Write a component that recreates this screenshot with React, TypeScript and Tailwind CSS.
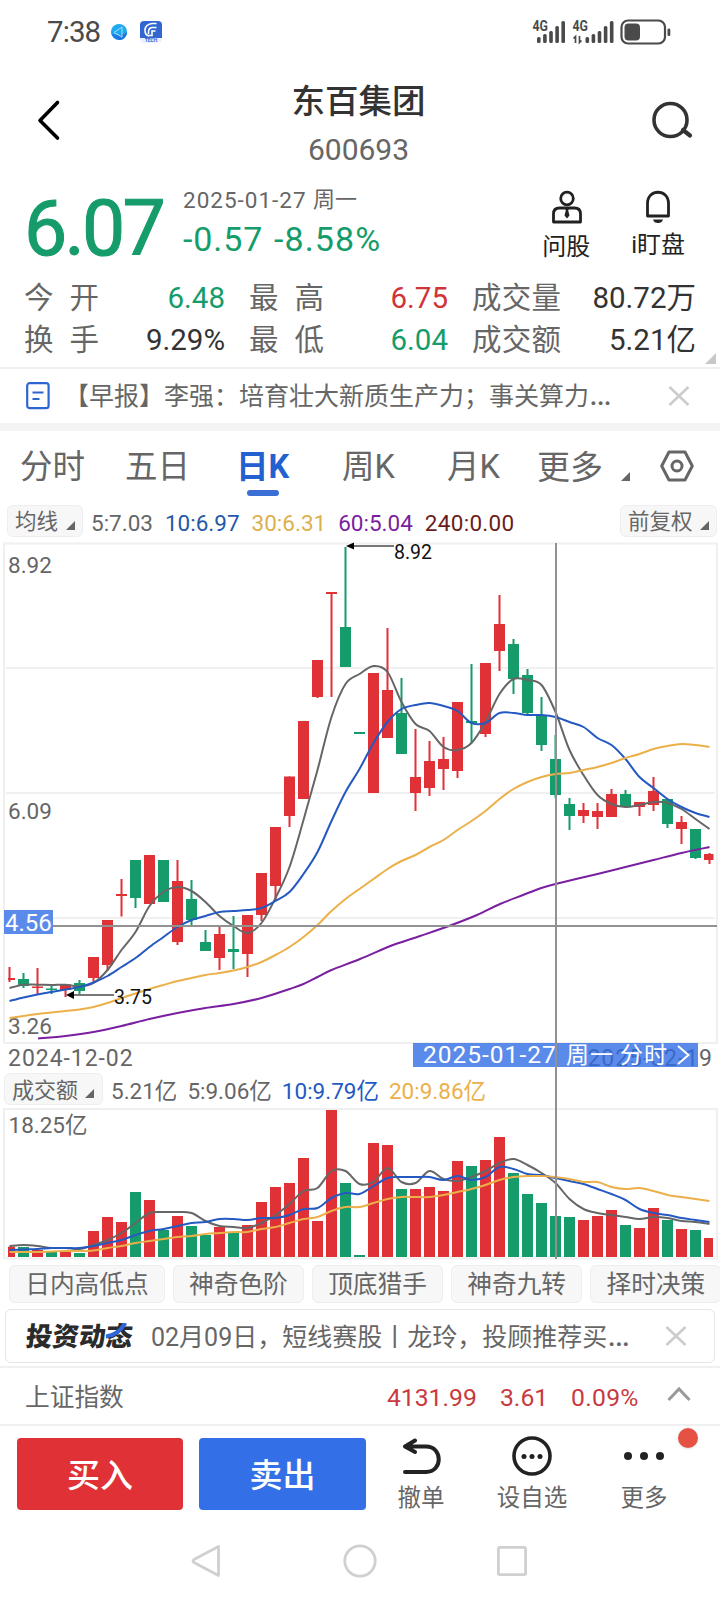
import React from "react";

type Candle = {
  up: boolean;
  top: number;
  bottom: number;
  high: number;
  low: number;
};

const RED = "#df3136";
const GREEN = "#159c6a";
const GRAY = "#666666";
const BLUE = "#2459c2";
const ORANGE = "#ecb04a";
const PURPLE = "#7a1fa0";

const STEP = 14;
const FIRST_X = 9.5;

const c = (up: number, top: number, bottom: number, high = top, low = bottom): Candle => ({
  up: up === 1,
  top,
  bottom,
  high,
  low,
});

const candles: Candle[] = [
  c(1, 978, 980, 967, 982), c(0, 979, 986, 973, 988), c(1, 986.5, 988, 968, 994),
  c(0, 988.5, 990, 986, 994), c(1, 984.5, 990, 984.5, 997), c(0, 983, 991, 980, 994),
  c(1, 957, 978, 957, 982), c(1, 920, 965, 920, 971), c(1, 894, 896, 879, 916.5),
  c(0, 860, 898, 860, 908), c(1, 855, 904), c(0, 860, 902),
  c(1, 881, 942, 860, 945), c(0, 899, 920, 880, 925), c(0, 942, 951, 930, 951),
  c(1, 934, 958, 927, 970), c(0, 949, 952, 916, 969), c(1, 915, 954, 915, 977),
  c(1, 873, 915, 873, 921), c(1, 827, 886, 827, 901), c(1, 776.5, 816, 776.5, 827),
  c(1, 721, 799), c(1, 660, 697, 660, 698), c(1, 592, 594, 592, 697),
  c(0, 627, 667, 547, 667), c(0, 732, 734), c(1, 673, 793),
  c(1, 690, 738, 628, 738), c(0, 713, 754, 678, 754), c(1, 777, 793, 729, 811),
  c(1, 761, 788, 741, 796), c(1, 759, 769, 737, 790), c(1, 702, 771, 702, 778),
  c(0, 721, 723, 664, 743), c(1, 663, 734, 663, 737), c(1, 624, 651, 595, 671),
  c(0, 644, 679, 639, 694), c(0, 675, 713, 669, 714), c(0, 715, 745, 697, 751),
  c(0, 759, 795, 735, 798), c(0, 804, 816, 798, 830), c(1, 810, 816, 803, 823),
  c(1, 811, 817, 803, 829), c(1, 794, 817, 789, 817), c(0, 794, 806, 790, 806),
  c(1, 802, 807, 802, 816), c(1, 791, 805, 777, 811), c(0, 799, 824, 799, 828),
  c(1, 822, 829, 816, 844), c(0, 829, 858, 829, 859), c(1, 854, 860, 853, 864),
];

const ma5 = [
  988, 984.7, 984.7, 985, 984.7, 986.5, 983, 970, 950, 932, 906, 892, 887, 891, 902, 916, 926,
  933, 923, 898, 867, 820, 770, 717, 684, 674, 666, 672, 702, 724, 731, 747, 750, 743, 722, 694,
  679, 680, 685, 712, 750, 775, 795, 804, 807, 805, 802, 803, 809, 819, 829,
];

const ma10 = [
  1001, 997.5, 994.5, 992, 989.5, 987, 982.5, 976, 967, 958, 947, 937, 927, 920, 916, 912, 911,
  910, 908, 901, 892, 874, 852, 821, 792, 769, 743, 722, 709, 705, 703, 706, 711, 723, 723, 713,
  713, 715, 715, 717, 722, 727, 738, 745, 759, 777, 788, 799, 807, 813, 817,
];

const ma30 = [
  1018, 1016, 1014, 1012.5, 1011, 1009.5, 1007, 1003, 998, 993.5, 989, 985, 981, 978, 975, 973,
  970.5, 967, 962, 955, 947, 937, 925, 911, 899, 889, 879, 869, 861, 855, 847, 840, 830, 821, 811,
  799, 789, 782, 777, 774, 773, 770, 767, 763, 758, 754, 749, 746, 744, 745, 747,
];

const ma60: [number, number][] = [
  [38, 1038.5], [65.5, 1036], [93.5, 1032], [121.5, 1026], [149.5, 1019], [177.5, 1013],
  [205.5, 1008], [233.5, 1004], [261.5, 998], [289.5, 989], [303.5, 984], [317.5, 977],
  [331.5, 970], [360, 959], [393, 945], [420, 936], [449, 926], [477, 915], [500, 904],
  [523, 895], [540, 888.5], [555.5, 884], [597.5, 874], [625.5, 867], [653.5, 860],
  [681.5, 853], [709.5, 847],
];

const volumes = [
  1246.7, 1247, 1250, 1252, 1251, 1253, 1231, 1217, 1222, 1192, 1200, 1230, 1216, 1226, 1235,
  1227, 1233, 1225, 1202, 1187, 1183, 1158, 1221, 1110, 1183, 1255, 1143, 1145, 1189, 1189, 1187,
  1191, 1161, 1166, 1160, 1137, 1173, 1194, 1203, 1216, 1217, 1220, 1216, 1210, 1225, 1228, 1208,
  1220, 1229, 1230, 1238,
];

const vol5 = [
  1246, 1245, 1246, 1248, 1248, 1249, 1245, 1240, 1233, 1223, 1213, 1212, 1212, 1213, 1221, 1226,
  1227, 1228, 1223, 1215, 1204, 1191, 1188, 1171, 1171, 1184, 1182, 1168, 1182, 1183, 1171, 1179,
  1181, 1177, 1171, 1163, 1159, 1165, 1173, 1183, 1199, 1209, 1213, 1215, 1217, 1219, 1217, 1218,
  1221, 1222, 1224,
];

const vol10 = [
  1250, 1249.5, 1249, 1248, 1248, 1248, 1246, 1243, 1240, 1235, 1231, 1229, 1226, 1223, 1222,
  1219, 1219, 1220, 1218, 1218, 1215, 1209, 1208, 1198, 1193, 1194, 1186, 1178, 1177, 1177, 1177,
  1180, 1176, 1180, 1177, 1167, 1169, 1174, 1175, 1178, 1181, 1184, 1189, 1194, 1200, 1209, 1213,
  1215, 1218, 1220, 1222,
];

const vol20 = [
  1252, 1252, 1252, 1251.5, 1251, 1251, 1250.5, 1248, 1246, 1243, 1241, 1239, 1237, 1236, 1234,
  1233, 1232, 1232, 1229, 1227, 1223, 1219, 1217, 1211, 1207, 1207, 1203, 1199, 1197, 1197, 1197,
  1195, 1192, 1189, 1185, 1180, 1177, 1176, 1176, 1177, 1179, 1182, 1182, 1187, 1189, 1188, 1191,
  1195, 1197, 1199, 1201,
];

const toPoints = (ys: number[]): [number, number][] =>
  ys.map((y, i) => [FIRST_X + i * STEP, y]);

// catmull-rom to bezier
const smooth = (pts: [number, number][]) => {
  let d = `M${pts[0][0]},${pts[0][1]}`;
  for (let i = 0; i < pts.length - 1; i++) {
    const p0 = pts[i - 1] || pts[i];
    const p1 = pts[i];
    const p2 = pts[i + 1];
    const p3 = pts[i + 2] || p2;
    d += `C${p1[0] + (p2[0] - p0[0]) / 6},${p1[1] + (p2[1] - p0[1]) / 6} ${
      p2[0] - (p3[0] - p1[0]) / 6
    },${p2[1] - (p3[1] - p1[1]) / 6} ${p2[0]},${p2[1]}`;
  }
  return d;
};

const Line = ({ points, color }: { points: [number, number][]; color: string }) => (
  <path d={smooth(points)} fill="none" stroke={color} strokeWidth="2" />
);

const Corner = ({ className = "h-[9px] w-[9px]" }: { className?: string }) => (
  <svg className={className} viewBox="0 0 10 10" preserveAspectRatio="none">
    <path d="M10 0V10H0Z" fill="currentColor" />
  </svg>
);

const Cross = () => (
  <svg className="h-5 w-[22px]" viewBox="0 0 22 20" fill="none" stroke="#cccccc" strokeWidth="2.6">
    <path d="M1.5 1 20.5 19M20.5 1 1.5 19" />
  </svg>
);

const Signal = ({ bars }: { bars: number[] }) => (
  <>
    {bars.map((h, i) => (
      <rect key={i} x={i * 6.1} y={23 - h} width="3.6" height={h} rx="1.5" fill="#4a4a4a" />
    ))}
  </>
);

const StatusBar = () => (
  <div className="flex h-16 items-center pl-[47px] pr-[48px] text-[#4a4a4a]">
    <span className="w-[54px] pt-[2px] text-[29.500px] leading-none tracking-[-0.9px]">7:38</span>
    <svg className="ml-[10px] h-4 w-4" viewBox="0 0 16 16" fill="none">
      <circle cx="8" cy="8" r="8" fill="#1eaaf0" />
      <path d="M0 9C3 14 6 16 9 16C13 16 16 12 16 8C10 12 5 12 0 9Z" fill="#1f74e6" />
      <path d="M3 8.5 11 3M3 8.5 11 13M11 3V13" stroke="#a9e2ff" strokeWidth="1" />
    </svg>
    <svg className="ml-[13px] h-[22px] w-[22px]" viewBox="0 0 22 22" fill="none">
      <rect width="22" height="17" rx="4" fill="#3267d2" />
      <path d="M0 12H22V18Q22 22 18 22H4Q0 22 0 18Z" fill="#eaf1ff" />
      <path d="M0 10H22V17H0Z" fill="#3267d2" />
      <path
        d="M16.5 2.500H12Q5 3.500 5 9.500Q5 14 9 15M16.500 6.500H12Q8.500 7 8.500 11V13M15.500 10H12V14.500H8.500"
        stroke="#fff"
        strokeWidth="1.600"
      />
      <text x="11" y="21" textAnchor="middle" fontSize="5" fontWeight="700" fill="#3267d2">
        TECH
      </text>
    </svg>
    <svg className="ml-auto h-7 w-[140px] overflow-visible" viewBox="0 0 140 28">
      <text x="0.500" y="13" fontSize="15" fontWeight="700" textLength="15.500" lengthAdjust="spacingAndGlyphs" fill="#4a4a4a">
        4G
      </text>
      <g transform="translate(5 2)">
        <Signal bars={[6, 9, 12, 17, 22]} />
      </g>
      <text x="40.500" y="13" fontSize="15" fontWeight="700" textLength="15.500" lengthAdjust="spacingAndGlyphs" fill="#4a4a4a">
        4G
      </text>
      <path d="M43.500 25V18.500L41.500 20.500M47.500 18V24.500L49.500 22.500" fill="none" stroke="#4a4a4a" strokeWidth="1.700" />
      <g transform="translate(53.500 2)">
        <Signal bars={[6, 9, 12, 17, 22]} />
      </g>
      <rect x="89.500" y="2.500" width="43.500" height="23" rx="6.500" fill="none" stroke="#4a4a4a" strokeWidth="2.200" />
      <rect x="92.500" y="5.500" width="15.500" height="17" rx="4" fill="#4a4a4a" />
      <rect x="135.500" y="10.500" width="2.800" height="7.500" rx="1.300" fill="#4a4a4a" />
    </svg>
  </div>
);

const Header = () => (
  <div className="flex h-28 items-start justify-between pl-[37px] pr-[27px] pt-3">
    <svg className="h-[88px] w-6" viewBox="0 0 24 88" fill="none" stroke="#000" strokeWidth="3.600">
      <path d="M20.500 26.500 3 44.500 20.500 62" strokeLinecap="round" strokeLinejoin="round" />
    </svg>
    <div className="pl-[5px] text-center">
      <div className="pt-px text-[33.500px] font-medium leading-[49px] text-[#333]">东百集团</div>
      <div className="text-[30px] leading-[48px] text-[#666]">600693</div>
    </div>
    <svg className="h-[88px] w-[42px]" viewBox="0 0 42 88" fill="none" stroke="#333" strokeWidth="3.600">
      <circle cx="19.500" cy="44" r="16.500" />
      <path d="M32 54 39 59.500" strokeLinecap="round" strokeWidth="4.200" />
    </svg>
  </div>
);

const Quote = () => (
  <div className="flex h-[100px]">
    <div className="w-[183px] pl-[24px] pt-1 text-[77px] leading-[98px] tracking-[-2.800px] text-[#159c6a] [-webkit-text-stroke:1px_#159c6a]">
      6.07
    </div>
    <div className="pt-[6px]">
      <div className="flex whitespace-nowrap text-[22.500px] leading-9 text-[#666]">
        <span className="w-[130px] tracking-[1px]">2025-01-27</span>
        <span className="text-[22px]">周一</span>
      </div>
      <div className="flex whitespace-nowrap text-[34px] leading-[43px] text-[#159c6a]">
        <span className="w-[91px] tracking-[0.900px]">-0.57</span>
        <span className="tracking-[1.100px]">-8.58%</span>
      </div>
    </div>
    <div className="ml-auto flex gap-[39px] pr-[35px] pt-[14px] text-[24px] leading-[32px] text-[#222]">
      <div className="flex flex-col items-center gap-[7px]">
        <svg className="h-[34px] w-[32px]" viewBox="0 0 32 34" fill="none" stroke="#222" strokeWidth="2.800">
          <circle cx="16" cy="8.500" r="6.300" />
          <path d="M2.500 32V24Q2.500 18 8.500 18H23.500Q29.500 18 29.500 24V32Z" strokeLinejoin="round" />
          <path d="M14 18.500H18L17.200 20.500 18.500 25.500 16 28.500 13.500 25.500 14.800 20.500Z" fill="#222" stroke="none" />
        </svg>
        <span className="mr-[2px]">问股</span>
      </div>
      <div className="flex flex-col items-center gap-[5px]">
        <svg className="h-[34px] w-7" viewBox="0 0 28 34" fill="none" stroke="#222" strokeWidth="2.800">
          <path d="M3.500 26V13.500C3.500 -1.500 24.500 -1.500 24.500 13.500V26Z" strokeLinejoin="round" />
          <path d="M9 29.500H19Q18 33 14 33T9 29.500Z" fill="#222" stroke="none" />
        </svg>
        <span>i盯盘</span>
      </div>
    </div>
  </div>
);

interface StatProps {
  label: string;
  value: string;
  color: string;
}

const Stat: React.FC<StatProps> = ({ label, value, color }) => (
  <div className="flex h-[42px] items-center justify-between">
    <span className={`flex justify-between text-[#666] ${label.length === 2 ? "w-[75px]" : "w-[89px]"}`}>
      {label.split("").map((ch) => (
        <span key={ch}>{ch}</span>
      ))}
    </span>
    <span className={color}>{value}</span>
  </div>
);

const Stats = () => (
  <div className="flex h-[93px] gap-6 border-b-2 border-[#f0f0f0] pl-[24px] pr-[24px] pt-[1.500px] text-[29.500px] leading-none">
    <div className="w-[201px]">
      <Stat label="今开" value="6.48" color="text-[#159c6a]" />
      <Stat label="换手" value="9.29%" color="text-[#333]" />
    </div>
    <div className="w-[199px]">
      <Stat label="最高" value="6.75" color="text-[#d13438]" />
      <Stat label="最低" value="6.04" color="text-[#159c6a]" />
    </div>
    <div className="relative w-[224px]">
      <Stat label="成交量" value="80.72万" color="text-[#333]" />
      <Stat label="成交额" value="5.21亿" color="text-[#333]" />
      <Corner className="absolute -right-5 top-[75px] h-[11px] w-[11px] text-[#c8c8c8]" />
    </div>
  </div>
);

const News = () => (
  <div className="flex h-[54px] items-center pl-[26px] pr-[30px]">
    <svg className="h-7 w-6" viewBox="0 0 24 28" fill="none" stroke="#2f65cf" strokeWidth="2.200">
      <rect x="1.200" y="1.200" width="21.400" height="25" rx="2.500" />
      <path d="M6.500 10.500H17.500M6.500 17H13.500" />
    </svg>
    <span className="ml-[14px] whitespace-nowrap pt-px text-[25px] leading-none text-[#666]">
      【早报】李强：培育壮大新质生产力；事关算力<span className="text-[34px] leading-[0]">…</span>
    </span>
    <span className="ml-auto">
      <Cross />
    </span>
  </div>
);

const Tabs = () => (
  <div className="box-content flex h-[69px] items-center border-t-8 border-[#f3f3f3] text-[32.500px] leading-none text-[#666]">
    <span className="ml-[20px] w-[105px] pt-[4px]">分时</span>
    <span className="w-[111px] pt-[4px]">五日</span>
    <span className="relative w-[106px] pt-[4px] font-bold text-[#2360d0]">
      日K
      <span className="absolute left-[11px] top-[43px] h-[6px] w-8 rounded-full bg-[#3a6fd6]" />
    </span>
    <span className="w-[105px] pt-[4px]">周K</span>
    <span className="w-[90px] pt-[4px]">月K</span>
    <span className="pt-[4px] text-[33px]">更多</span>
    <Corner className="ml-[18px] mt-[22px] h-[9px] w-[9px]" />
    <svg className="ml-[30px] h-8 w-[34px]" viewBox="0 0 34 32" fill="none" stroke="#666" strokeWidth="3">
      <path d="M9 2H25L32.300 16 25 30H9L1.700 16Z" strokeLinejoin="round" />
      <circle cx="17" cy="16" r="5" />
    </svg>
  </div>
);

const Averages = () => (
  <div className="flex h-[42px] items-center gap-[12px] pl-[7px] pr-[3px] text-[22.500px] leading-none">
    <span className="-mr-[4px] flex h-8 w-[76px] items-center justify-between rounded-md border border-[#eeeeee] bg-[#f7f7f7] px-[7px] pt-[2px] text-[21.500px] text-[#666]">
      均线
      <Corner className="mt-[6px] h-[9px] w-[9px]" />
    </span>
    <span className="pt-[5px] text-[#666]">5:7.03</span>
    <span className="pt-[5px] text-[#2459a8]">10:6.97</span>
    <span className="pt-[5px] text-[#ddb04e]">30:6.31</span>
    <span className="pt-[5px] text-[#7a1fa0]">60:5.04</span>
    <span className="pt-[5px] tracking-[0.300px] text-[#6b1d1a]">240:0.00</span>
    <span className="ml-auto flex h-8 w-[97px] items-center justify-between rounded-md border border-[#eeeeee] bg-[#f7f7f7] px-[7px] pt-[2px] text-[21.500px] text-[#666]">
      前复权
      <Corner className="mt-[6px] h-[9px] w-[9px]" />
    </span>
  </div>
);

const KChart = () => (
  <svg className="block h-[502px] w-[720px] overflow-visible" viewBox="0 542 720 502">
    <clipPath id="plot">
      <rect x="8" y="544" width="705.500" height="496" />
    </clipPath>
    <g fill="none" stroke="#f0f0f0" strokeWidth="2">
      <rect x="4" y="543.500" width="713" height="499.500" />
      <path d="M6 668H715M6 793H715M6 918H715" />
    </g>
    <g fontSize="22.500" fill={GRAY}>
      <text x="8" y="573">8.92</text>
      <text x="8" y="819">6.09</text>
      <text x="8" y="1034">3.26</text>
    </g>
    <g clipPath="url(#plot)">
      {candles.map((k, i) => {
        const x = FIRST_X + i * STEP;
        const fill = k.up ? RED : GREEN;
        return (
          <g key={i} fill={fill}>
            <rect x={x - 1} y={k.high} width="2" height={k.low - k.high} />
            <rect x={x - 5.5} y={k.top} width="11" height={k.bottom - k.top} />
          </g>
        );
      })}
      <Line points={toPoints(ma5)} color={GRAY} />
      <Line points={toPoints(ma10)} color={BLUE} />
      <Line points={toPoints(ma30)} color={ORANGE} />
      <Line points={ma60} color={PURPLE} />
    </g>
    <g stroke="#777" strokeWidth="1.800">
      <path d="M350 546H394M70 995H114" />
    </g>
    <path d="M346 546 354 542.500V549.500ZM66 995 74 991V999Z" fill="#000" />
    <g fontSize="19.500" fill="#111">
      <text x="394" y="559">8.92</text>
      <text x="114" y="1003.500">3.75</text>
    </g>
    <path d="M53 926H717" stroke="#919191" strokeWidth="2" />
    <rect x="4" y="910" width="49" height="24" fill="#5b8bea" />
    <text x="5" y="930.500" fontSize="24" fill="#fff">
      4.56
    </text>
  </svg>
);

const DateAxis = () => (
  <div className="relative flex h-[26px] items-center justify-between pl-[8px] pr-[7px] text-[23px] leading-none tracking-[0.950px] text-[#666]">
    <span className="mt-[3px]">2024-12-02</span>
    <span className="mt-[3px]">2025-02-19</span>
    <div className="absolute -top-px left-[413px] flex h-6 w-[285px] items-center whitespace-nowrap bg-[#2d6ae4]/78 pl-[10px] text-[24.500px] text-white">
      <span className="w-[143px] pt-px tracking-[1px]">2025-01-27</span>
      <span className="w-[54px] pt-px text-[23px]">周一</span>
      <span className="w-[57px] pt-px text-[23px]">分时</span>
      <svg className="h-[22px] w-[13px]" viewBox="0 0 13 22" fill="none" stroke="#fff" strokeWidth="2">
        <path d="M1 2 11.500 11 1 20" />
      </svg>
    </div>
  </div>
);

const VolumeHeader = () => (
  <div className="flex h-[38px] items-center gap-[10px] pl-1 text-[22.500px] leading-none">
    <span className="-mr-[2px] flex h-8 w-[99px] items-center justify-between rounded-md border border-[#eeeeee] bg-[#f7f7f7] px-[7px] pt-[3px] text-[22px] text-[#666]">
      成交额
      <Corner className="mr-px mt-[6px] h-[9px] w-[9px]" />
    </span>
    <span className="pt-[4px] text-[#666]">5.21亿</span>
    <span className="pt-[4px] text-[#666]">5:9.06亿</span>
    <span className="pt-[4px] text-[#2459c2]">10:9.79亿</span>
    <span className="pt-[4px] text-[#ecb04a]">20:9.86亿</span>
  </div>
);

const VolumeChart = () => (
  <svg className="block h-[152px] w-[720px]" viewBox="0 1108 720 152">
    <clipPath id="volPlot">
      <rect x="8" y="1109" width="705" height="149" />
    </clipPath>
    <rect x="4" y="1109" width="713" height="149.500" fill="none" stroke="#f0f0f0" strokeWidth="2" />
    <text x="8.500" y="1133" fontSize="22.500" fill={GRAY}>
      18.25亿
    </text>
    <g clipPath="url(#volPlot)">
      {volumes.map((y, i) => (
        <rect
          key={i}
          x={FIRST_X + i * STEP - 5.5}
          y={y}
          width="11"
          height={1257 - y}
          fill={candles[i].up ? RED : GREEN}
        />
      ))}
      <Line points={toPoints(vol5)} color={GRAY} />
      <Line points={toPoints(vol10)} color={BLUE} />
      <Line points={toPoints(vol20)} color={ORANGE} />
    </g>
  </svg>
);

const strategies = ["日内高低点", "神奇色阶", "顶底猎手", "神奇九转", "择时决策"];

const Strategies = () => (
  <div className="flex h-[49px] gap-2 overflow-hidden pl-[9px] pt-[5px] text-[24.700px] leading-none text-[#666]">
    {strategies.map((name) => (
      <span
        key={name}
        className="flex h-[38px] shrink-0 items-center rounded-md border border-[#eeeeee] bg-[#f7f7f7] px-[15.200px] pt-[3px]"
      >
        {name}
      </span>
    ))}
  </div>
);

const Dynamics = () => (
  <div className="mx-[5px] mb-[3px] flex h-[54px] items-center rounded-md border-[1.500px] border-[#e6e6e6] pl-[20px] pr-[27px]">
    <span className="relative w-[108px] -skew-x-6 whitespace-nowrap pt-[3px] text-[26.500px] font-black leading-none tracking-[0.200px] text-[#2b2b2b]">
      投资动态
      <svg className="absolute left-[79px] top-[2px] h-[16px] w-[22px]" viewBox="0 0 22 16" fill="none" stroke="#2f66d8" strokeWidth="4.200">
        <path d="M19 0Q13 12 1 13.500" />
      </svg>
    </span>
    <span className="ml-[17px] whitespace-nowrap pt-[3px] text-[25px] leading-none text-[#666]">
      02月09日，短线赛股丨龙玲，投顾推荐买<span className="text-[34px] leading-[0]">…</span>
    </span>
    <span className="ml-auto">
      <Cross />
    </span>
  </div>
);

const IndexBar = () => (
  <div className="flex h-[60px] items-center border-y-2 border-[#f0f0f0] pl-[25px] pr-[29px] text-[24.700px] leading-none text-[#c93a3e]">
    <span className="mr-auto pt-[4px] text-[#666]">上证指数</span>
    <span className="w-[113px] pt-[4px]">4131.99</span>
    <span className="w-[71px] pt-[4px]">3.61</span>
    <span className="w-[96px] pt-[4px] tracking-[0.300px]">0.09%</span>
    <svg className="-mt-1 h-4 w-6" viewBox="0 0 24 16" fill="none" stroke="#999" strokeWidth="3">
      <path d="M1.500 14 12 3 22.500 14" />
    </svg>
  </div>
);

const Actions = () => (
  <div className="flex h-[96px] pl-[17px] pt-3">
    <div className="flex h-[72px] w-[166px] items-center justify-center rounded-[4px] bg-[#df3136] pt-[2px] text-[33px] font-medium leading-none text-white">
      买入
    </div>
    <div className="ml-4 flex h-[72px] w-[167px] items-center justify-center rounded-[4px] bg-[#3370e7] pt-[2px] text-[33px] font-medium leading-none text-white">
      卖出
    </div>
    <div className="ml-[15px] flex w-[80px] flex-col items-center text-[23.500px] leading-[35px] text-[#666]">
      <svg className="mb-[7px] h-9 w-10" viewBox="0 0 40 36" fill="none" stroke="#222" strokeWidth="4" strokeLinecap="round">
        <path d="M14 2.500 4 8.500 14 14M4 8.500H25C42 8.500 42 34 25 34H4" strokeLinejoin="round" />
      </svg>
      撤单
    </div>
    <div className="ml-[31px] flex w-[80px] flex-col items-center text-[23.500px] leading-[35px] text-[#666]">
      <svg className="mb-[3px] h-10 w-10 overflow-visible" viewBox="0 0 40 40">
        <circle cx="20" cy="18" r="18" fill="none" stroke="#222" strokeWidth="3.600" />
        <circle cx="12" cy="18.500" r="2.500" fill="#222" />
        <circle cx="20" cy="18.500" r="2.500" fill="#222" />
        <circle cx="28" cy="18.500" r="2.500" fill="#222" />
      </svg>
      设自选
    </div>
    <div className="relative ml-[32px] flex w-[80px] flex-col items-center text-[23.500px] leading-[35px] text-[#666]">
      <svg className="mb-[7px] h-9 w-10" viewBox="0 0 40 36" fill="#222">
        <circle cx="4" cy="18" r="4" />
        <circle cx="20" cy="18" r="4" />
        <circle cx="36" cy="18" r="4" />
      </svg>
      更多
      <span className="absolute -top-[10px] left-[74px] h-5 w-5 rounded-full bg-[#e55142] shadow" />
    </div>
  </div>
);

const NavBar = () => (
  <div className="flex h-[78px] items-center justify-between pl-[190px] pr-[192px]">
    <svg className="h-9 w-8" viewBox="0 0 32 36" fill="none" stroke="#d0d0d0" strokeWidth="2.800">
      <path d="M28.500 3.500V32.500L4 19.500Q2 18 4 16.500Z" strokeLinejoin="round" />
    </svg>
    <svg className="ml-[2px] h-9 w-9" viewBox="0 0 36 36" fill="none" stroke="#d0d0d0" strokeWidth="2.800">
      <circle cx="18" cy="18" r="15.200" />
    </svg>
    <svg className="h-8 w-8" viewBox="0 0 32 32" fill="none" stroke="#d0d0d0" strokeWidth="2.800">
      <rect x="2.400" y="2.400" width="27.200" height="27.200" rx="1.500" />
    </svg>
  </div>
);

const App = () => {
  return (
    <div className="h-[1600px] w-[720px] overflow-hidden bg-white font-['Roboto','Noto_Sans_CJK_SC',sans-serif]">
      <StatusBar />
      <Header />
      <Quote />
      <Stats />
      <News />
      <Tabs />
      <Averages />
      <div className="relative">
        <KChart />
        <DateAxis />
        <VolumeHeader />
        <VolumeChart />
        {/* crosshair */}
        <div className="absolute left-[554.500px] top-px h-[716px] w-[2px] bg-[#919191]" />
      </div>
      <Strategies />
      <Dynamics />
      <IndexBar />
      <Actions />
      <NavBar />
    </div>
  );
};

export default App;
